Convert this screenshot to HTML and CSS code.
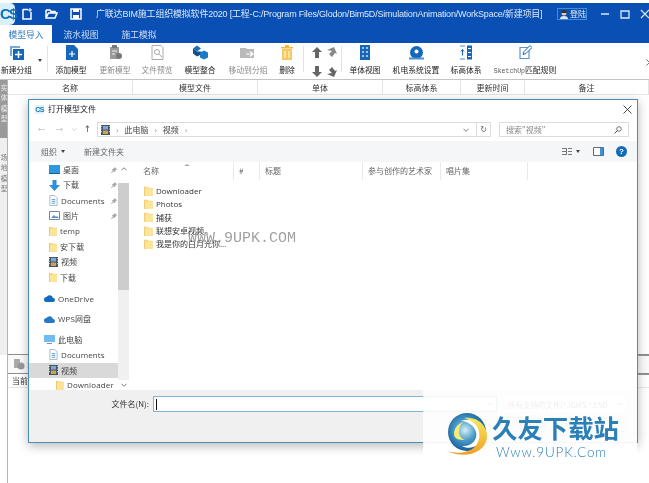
FILE: index.html
```html
<!DOCTYPE html>
<html lang="zh">
<head>
<meta charset="utf-8">
<title>广联达BIM施工组织模拟软件2020</title>
<link rel="stylesheet" href="styles.css">
</head>
<body>
<svg class="defs" width="0" height="0">
  <symbol id="folder" viewBox="0 0 10 12"><path d="M0 1h4l1 1h5v10H0z" fill="#fbd777"/><path d="M0 3h10v9H0z" fill="#fde49b"/><path d="M0 1h1v11H0z" fill="#e9c468"/></symbol>
  <symbol id="video" viewBox="0 0 10 11"><rect width="10" height="11" fill="#3b4a5c"/><rect x="2" y="1" width="6" height="4" fill="#7fa8d0"/><rect x="2" y="6" width="6" height="4" fill="#c9a45a"/><path d="M0 1h1v1H0zM0 4h1v1H0zM0 7h1v1H0zM9 1h1v1H9zM9 4h1v1H9zM9 7h1v1H9z" fill="#fff"/></symbol>
  <symbol id="doc" viewBox="0 0 10 12"><path d="M1 .5h5.500L9 3v8.500H1z" fill="#fff" stroke="#9fb4c6"/><path d="M3 5h4M3 7h4M3 9h4" stroke="#4a9bd0"/></symbol>
  <symbol id="pin" viewBox="0 0 8 8"><path d="M5 0l3 3-1 .5-1.500 2L5 7 3.500 5.500 1 8 0 8v-.500L2.500 4.500 1 3l1.500-.5 2-1.500z" fill="#a9a9a9"/></symbol>
  <symbol id="chev" viewBox="0 0 7 4"><path d="M.5.500l3 3 3-3" fill="none" stroke="#666"/></symbol>
</svg>
<div class="app">
  <div class="topgap"></div>
  <header class="titlebar">
    <div class="applogo">C$</div>
    <svg class="qa qa-first" width="12" height="12" viewBox="0 0 12 12"><path d="M2 1.500h5M2 1v10h8V4" fill="none" stroke="#fff" stroke-width="1.500"/><path d="M9 0v4M7 2h4" stroke="#fff"/></svg>
    <svg class="qa" width="13" height="12" viewBox="0 0 13 12"><path d="M1 2h4l1 1.500h4V5M1 2v8h9l2-5H3.500L1 10" fill="none" stroke="#fff" stroke-width="1.500"/></svg>
    <svg class="qa" width="12" height="12" viewBox="0 0 12 12"><path d="M1 1h10v10H1z" fill="none" stroke="#fff" stroke-width="1.500"/><path d="M3 1h6v3H3zM3 7h6v4H3z" fill="#fff"/></svg>
    <div class="wintitle">广联达BIM施工组织模拟软件2020 [工程-C:/Program Files/Glodon/Bim5D/SimulationAnimation/WorkSpace/新建项目]</div>
    <div class="login">
      <svg width="8" height="9" viewBox="0 0 8 9"><circle cx="4" cy="3" r="2.500" fill="#f0c8a0"/><path d="M1 3a3 3 0 0 1 6 0z" fill="#333"/><path d="M0 9a4 3 0 0 1 8 0z" fill="#dfe8f2"/></svg>
      <span>登陆</span>
    </div>
    <div class="winbtns">
      <svg width="10" height="10" viewBox="0 0 10 10"><path d="M1 5h8" stroke="#dce8f8" stroke-width="1.500"/></svg>
      <svg width="10" height="10" viewBox="0 0 10 10"><path d="M1 2h8v7H1z" fill="none" stroke="#dce8f8" stroke-width="1.300"/></svg>
      <svg width="10" height="10" viewBox="0 0 10 10"><path d="M1 1l8 8M9 1l-8 8" stroke="#dce8f8" stroke-width="1.200"/></svg>
    </div>
  </header>
  <nav class="tabs">
    <div class="tab tab-active">模型导入</div>
    <div class="tab">流水视图</div>
    <div class="tab">施工模拟</div>
  </nav>
  <section class="ribbon">
    <div class="rb w-new">
      <svg width="15" height="15" viewBox="0 0 15 15"><path d="M1 1h10v2H3v8H1z" fill="#7aa9d8"/><path d="M4 4h11v11H4z" fill="#1667b8"/><path d="M9.500 6v7M6 9.500h7" stroke="#fff" stroke-width="1.500"/></svg>
      <span>新建分组</span>
    </div>
    <div class="caret-box"><i class="caret"></i></div>
    <div class="rb-sep"></div>
    <div class="rb w-a">
      <svg width="13" height="15" viewBox="0 0 13 15"><path d="M1 0h8l4 4v11H1z" fill="#1667b8"/><path d="M7 6v6M4 9h6" stroke="#fff" stroke-width="1.200"/></svg>
      <span>添加模型</span>
    </div>
    <div class="rb w-b is-off">
      <svg width="13" height="15" viewBox="0 0 13 15"><path d="M1 2h9v12H1z" fill="#9a9a9a"/><path d="M3 0h5v3H3z" fill="#777"/><path d="M3 6h5M3 9h3" stroke="#eee"/><circle cx="10" cy="11" r="3" fill="#777"/></svg>
      <span>更新模型</span>
    </div>
    <div class="rb w-c is-off">
      <svg width="13" height="15" viewBox="0 0 13 15"><path d="M1 .500h9l2 2v12H1z" fill="#fff" stroke="#aaa"/><circle cx="6" cy="7" r="2.500" fill="none" stroke="#aaa"/><path d="M8 9l3 3" stroke="#aaa"/></svg>
      <span>文件预览</span>
    </div>
    <div class="rb w-d">
      <svg width="15" height="14" viewBox="0 0 15 14"><path d="M0 3l4-3 4 3-4 3z" fill="#1d6fb8"/><path d="M0 3v5l4 3V6zM8 3v3L4 6v5l4-2z" fill="#0f4f8c"/><path d="M7 7l4-2 4 2v5l-4 2-4-2z" fill="#1a7ac8"/></svg>
      <span>模型整合</span>
    </div>
    <div class="rb w-e is-off">
      <svg width="16" height="13" viewBox="0 0 16 13"><path d="M0 2h6l1 1h7v9H0z" fill="#b9b9b9"/><path d="M6 8h7M10 5.500L13 8l-3 2.500" fill="none" stroke="#fff" stroke-width="1.200"/></svg>
      <span>移动到分组</span>
    </div>
    <div class="rb w-f">
      <svg width="12" height="15" viewBox="0 0 12 15"><path d="M0 2h12v1.500H0zM4 0h4v2H4z" fill="#f0b840"/><path d="M1 4h10v11H1z" fill="#f6c95c"/><path d="M4 6v7M8 6v7" stroke="#fff"/></svg>
      <span>删除</span>
    </div>
    <div class="rb-sep sep-left"></div>
    <div class="arrows">
      <div class="arrow-row"><svg width="10" height="11" viewBox="0 0 10 11"><path d="M5 0l5 5H7v6H3V5H0z" fill="#666"/></svg><svg width="10" height="11" viewBox="0 0 10 11"><path d="M0 3l7-3 3 7-2-1-3 4-3-3 3-3z" fill="#888"/></svg></div>
      <div class="arrow-row"><svg width="10" height="11" viewBox="0 0 10 11"><path d="M5 11l5-5H7V0H3v6H0z" fill="#666"/></svg><svg width="10" height="11" viewBox="0 0 10 11"><path d="M0 8l7 3 3-7-2 1-3-4-3 3 3 3z" fill="#666"/></svg></div>
    </div>
    <div class="rb-sep"></div>
    <div class="rb w-g">
      <svg width="10" height="15" viewBox="0 0 10 15"><path d="M0 0h10v15H0z" fill="#1667b8"/><path d="M2 2h2v2H2zM6 2h2v2H6zM2 6h2v2H2zM6 6h2v2H6zM2 10h2v2H2zM6 10h2v2H6z" fill="#9cc4ea"/></svg>
      <span>单体视图</span>
    </div>
    <div class="rb w-h">
      <svg width="15" height="14" viewBox="0 0 15 14"><circle cx="7.500" cy="7" r="6.500" fill="#1667b8"/><circle cx="7.500" cy="6" r="2" fill="#fff"/><path d="M0 12h15v2H0z" fill="#4f90d0"/></svg>
      <span>机电系统设置</span>
    </div>
    <div class="rb w-i">
      <svg width="12" height="14" viewBox="0 0 12 14"><path d="M0 .500h5M0 13.500h5" stroke="#4f90d0"/><path d="M2.500 10V4M1 6l1.500-2L4 6" fill="none" stroke="#1667b8"/><path d="M7 0h5v14H7z" fill="#1667b8"/><path d="M8 3h3M8 7h3M8 11h3" stroke="#fff"/></svg>
      <span>标高体系</span>
    </div>
    <div class="rb w-j">
      <svg width="13" height="14" viewBox="0 0 13 14"><path d="M1 2h9v11H1z" fill="none" stroke="#5f97cc" stroke-width="1.200"/><path d="M4 9l1-3 6-6 2 2-6 6z" fill="#fff" stroke="#1667b8"/></svg>
      <span><b class="mono">SketchUp</b>匹配规则</span>
    </div>
    <div class="rb-more"><svg width="4" height="7" viewBox="0 0 4 7"><path d="M.5.500l3 3-3 3" fill="none" stroke="#777"/></svg></div>
  </section>
  <div class="workarea">
    <aside class="strip">
      <div class="strip-on">实体模型</div>
      <div class="strip-off">场地模型</div>
    </aside>
    <main class="main">
      <div class="thead">
        <div>名称</div><div>模型文件</div><div>单体</div><div>标高体系</div><div>更新时间</div><div>备注</div>
      </div>
      <div class="blank"></div>
      <div class="lower-tab">
        <svg width="13" height="11" viewBox="0 0 13 11"><path d="M2 0h6v9H2z" fill="#aaa"/><circle cx="9" cy="7" r="3.500" fill="#999"/></svg>
        <span>录</span>
      </div>
      <div class="lower-head">当前</div>
      <div class="lower-body"></div>
    </main>
  </div>

  <div class="dialog">
    <div class="dlg-title">
      <span class="dlg-cs">CS</span>
      <span class="dlg-name">打开模型文件</span>
      <svg class="dlg-x" width="9" height="9" viewBox="0 0 9 9"><path d="M.5.500l8 8M8.500.500l-8 8" stroke="#333" stroke-width=".9"/></svg>
    </div>
    <div class="addr-row">
      <span class="nav-arrow dim">←</span>
      <span class="nav-arrow dim">→</span>
      <svg class="nav-small" width="5" height="3"><use href="#chev"/></svg>
      <span class="nav-arrow up">↑</span>
      <div class="addr">
        <svg width="9" height="10"><use href="#video"/></svg>
        <span class="crumb-s">›</span><span>此电脑</span><span class="crumb-s">›</span><span>视频</span><span class="crumb-s">›</span>
        <span class="grow"></span>
        <svg class="addr-drop" width="6" height="4"><use href="#chev"/></svg>
        <span class="addr-ref">↻</span>
      </div>
      <div class="search"><span>搜索"视频"</span><svg width="8" height="8" viewBox="0 0 8 8"><circle cx="5" cy="3" r="2.300" fill="none" stroke="#555" stroke-width=".8"/><path d="M3.500 4.500L.5 7.500" stroke="#555"/></svg></div>
    </div>
    <div class="toolbar">
      <span>组织</span><i class="caret caret-s"></i>
      <span class="tb-new">新建文件夹</span>
      <span class="grow"></span>
      <svg class="tb-view" width="10" height="7" viewBox="0 0 10 7"><path d="M0 .5h4M6 .5h4M0 3.500h4M6 3.500h4M0 6.500h4M6 6.500h4" stroke="#777"/><path d="M4.500 0v7" stroke="#777"/></svg>
      <i class="caret caret-s"></i>
      <svg class="tb-pane" width="11" height="9" viewBox="0 0 11 9"><path d="M.5.500h10v8H.5z" fill="#fff" stroke="#667"/><path d="M7 1h3v7H7z" fill="#3f8fd6"/></svg>
      <span class="help">?</span>
    </div>
    <div class="dlg-body">
      <div class="navpane">
        <div class="navlist">
          <div class="nv nv1"><svg width="11" height="9" viewBox="0 0 11 9"><path d="M0 0h11v8H0z" fill="#2a9ae0"/><path d="M0 8h11v1H0z" fill="#1a5f90"/></svg><span>桌面</span><svg class="pin" width="6" height="6"><use href="#pin"/></svg></div>
          <div class="nv nv1"><svg width="11" height="11" viewBox="0 0 11 11"><path d="M3.500 0h4v5H11L5.500 11 0 5h3.500z" fill="#2f8fdc"/></svg><span>下载</span><svg class="pin" width="6" height="6"><use href="#pin"/></svg></div>
          <div class="nv nv1"><svg width="9" height="11"><use href="#doc"/></svg><span>Documents</span><svg class="pin" width="6" height="6"><use href="#pin"/></svg></div>
          <div class="nv nv1"><svg width="11" height="9" viewBox="0 0 11 9"><path d="M.5.500h10v8H.5z" fill="#fff" stroke="#6a8aa8"/><path d="M2 7l3-3 2 2 1-1 2 2z" fill="#5a93c4"/></svg><span>图片</span><svg class="pin" width="6" height="6"><use href="#pin"/></svg></div>
          <div class="nv nv1"><svg width="8" height="10"><use href="#folder"/></svg><span>temp</span></div>
          <div class="nv nv1"><svg width="8" height="10"><use href="#folder"/></svg><span>安下载</span></div>
          <div class="nv nv1"><svg width="9" height="10"><use href="#video"/></svg><span>视频</span></div>
          <div class="nv nv1"><svg width="8" height="10"><use href="#folder"/></svg><span>下载</span></div>
          <div class="nv nv0 gap-a"><svg width="11" height="7" viewBox="0 0 11 7"><path d="M2.500 7a2.500 2.500 0 0 1 0-5A3.500 3.500 0 0 1 9 3a2 2 0 0 1 0 4z" fill="#0f6cc0"/></svg><span>OneDrive</span></div>
          <div class="nv nv0 gap-b"><svg width="11" height="8" viewBox="0 0 11 8"><path d="M2.500 8a2.500 2.500 0 0 1 0-5A3.500 3.500 0 0 1 9 4a2 2 0 0 1 0 4z" fill="#2a78c4"/></svg><span>WPS网盘</span></div>
          <div class="nv nv0 gap-b"><svg width="11" height="9" viewBox="0 0 11 9"><path d="M0 0h11v7H0z" fill="#6fbdf0"/><path d="M3 8h5v1H3z" fill="#88a"/></svg><span>此电脑</span></div>
          <div class="nv nv1"><svg width="9" height="11"><use href="#doc"/></svg><span>Documents</span></div>
          <div class="nv nv1 nv-sel"><svg width="9" height="10"><use href="#video"/></svg><span>视频</span></div>
          <div class="nv nv2"><svg width="8" height="10"><use href="#folder"/></svg><span>Downloader</span></div>
        </div>
        <div class="scroll">
          <div class="sc-top"><svg class="flip" width="6" height="4"><use href="#chev"/></svg></div>
          <div class="sc-thumb"></div>
          <span class="grow"></span>
          <div class="sc-bot"><svg width="6" height="4"><use href="#chev"/></svg></div>
        </div>
      </div>
      <div class="files">
        <div class="fhead">
          <div class="fc fc1">名称</div><div class="fc fc2">#</div><div class="fc fc3">标题</div><div class="fc fc4">参与创作的艺术家</div><div class="fc fc5">唱片集</div>
          <i class="sort"></i>
        </div>
        <div class="frows">
          <div class="frow"><svg width="9" height="10"><use href="#folder"/></svg><span>Downloader</span></div>
          <div class="frow"><svg width="9" height="10"><use href="#folder"/></svg><span>Photos</span></div>
          <div class="frow"><svg width="9" height="10"><use href="#folder"/></svg><span>捕获</span></div>
          <div class="frow"><svg width="9" height="10"><use href="#folder"/></svg><span>联想安卓视频</span></div>
          <div class="frow"><svg width="9" height="10"><use href="#folder"/></svg><span>我是你的白月光你...</span></div>
        </div>
      </div>
    </div>
    <div class="dlg-foot">
      <div class="foot-row">
        <label class="fname">文件名(N):</label>
        <div class="finput"><i class="cursor"></i><span class="grow"></span><svg class="drop" width="6" height="4"><use href="#chev"/></svg></div>
        <div class="ftype"><span>所有支持的文件(*.iGMS *.ESD</span><svg class="drop" width="6" height="4"><use href="#chev"/></svg></div>
      </div>
      <div class="foot-btns">
        <div class="fbtn">打开(O)</div>
        <div class="fbtn">取消</div>
      </div>
    </div>
  </div>

  <div class="lines-r"></div>
  <div class="wm-text">WWW.9UPK.COM</div>
  <div class="wm-cover"></div>
  <div class="wm-logo">
    <svg width="46" height="47" viewBox="0 0 46 47">
      <defs>
        <radialGradient id="ball" cx="45%" cy="45%" r="60%"><stop offset="0" stop-color="#d8eef6"/><stop offset=".45" stop-color="#4a9cc8"/><stop offset="1" stop-color="#0d4f92"/></radialGradient>
        <linearGradient id="ring" x1="0" y1="0" x2="0" y2="1"><stop offset="0" stop-color="#f6e860"/><stop offset="1" stop-color="#f0a024"/></linearGradient>
      </defs>
      <circle cx="20" cy="20" r="19" fill="url(#ball)"/>
      <path d="M14 9C24 5 37 10 37 21c0 12-14 18-22 13 10 1 16-7 14-14C27 13 20 9 14 9z" fill="#fff"/>
      <path d="M17 6c14-2 24 8 23 20C38 40 20 48 0 39c14 4 29 1 32-12C34 15 27 9 17 6z" fill="url(#ring)"/>
      <path d="M7 22c0-6 4-10 9-12-3 3-4 6-4 10 0 4 3 7 6 8-6 0-11-1-11-6z" fill="#f5ea7a"/>
    </svg>
    <div class="wm-words">
      <div class="wm-cn">久友下载站</div>
      <div class="wm-en">Www.9UPK.Com</div>
    </div>
  </div>
</div>
</body>
</html>
```

FILE: styles.css
```css
* { box-sizing: border-box; }
html, body { margin: 0; padding: 0; background: #fff; }
body { width: 649px; height: 483px; overflow: hidden; }
.defs { position: absolute; }
.grow { flex: 1; }
.app {
  position: relative;
  width: 649px;
  height: 483px;
  overflow: hidden;
  display: flex;
  flex-direction: column;
  background: #fff;
  color: #333;
  font: 8px/1.2 "Noto Sans CJK SC", "Open Sans", sans-serif;
  filter: blur(.35px);
}
.topgap { height: 3px; flex: none; }

/* title bar */
.titlebar {
  height: 22px;
  flex: none;
  display: flex;
  align-items: center;
  background: #0a50b4;
  color: #dbe8f8;
  position: relative;
}
.applogo {
  width: 15px;
  height: 22px;
  background: #d9f0fa;
  border-radius: 0 5px 5px 0;
  color: #1270b8;
  font: 700 15px/22px "Liberation Sans", sans-serif;
  text-align: center;
  letter-spacing: -1.500px;
  flex: none;
}
.qa { margin-left: 12px; flex: none; }
.qa-first { margin-left: 6px; }
.wintitle {
  margin-left: 14px;
  font: 400 9px/12px "Liberation Sans", "Noto Sans CJK SC", sans-serif;
  letter-spacing: -.2px;
  white-space: nowrap;
  width: 456px;
  flex: none;
}
.login {
  margin-left: 5px;
  width: 30px;
  height: 12px;
  border: 1px solid #3d8ddc;
  display: flex;
  align-items: center;
  gap: 2px;
  padding-left: 2px;
  color: #e8f0fa;
  font-size: 8px;
  flex: none;
}
.winbtns { margin-left: 13px; display: flex; gap: 10px; flex: none; }

/* tabs */
.tabs {
  height: 18px;
  flex: none;
  display: flex;
  background: #0a50b4;
  color: #cfdff4;
  font-size: 8.800px;
}
.tab { width: 58px; line-height: 20px; text-align: center; }
.tab-active { width: 52px; background: #fff; color: #2e78bc; }

/* ribbon */
.ribbon {
  height: 37px;
  flex: none;
  display: flex;
  background: #fff;
  border-bottom: 1px solid #c4c4c4;
  align-items: stretch;
  white-space: nowrap;
  color: #222;
  font-size: 7.800px;
}
.rb {
  display: flex;
  flex-direction: column;
  align-items: center;
  flex: none;
  padding-top: 2px;
}
.rb svg { height: 15px; flex: none; }
.rb span { margin-top: 4px; line-height: 11px; }
.is-off { color: #8a8a8a; }
.w-new { width: 33px; }
.caret-box { width: 14px; padding: 16px 0 0 5px; flex: none; }
.caret {
  display: block;
  width: 0;
  height: 0;
  border: 2.500px solid transparent;
  border-top: 3px solid #444;
  border-bottom: 0;
}
.rb-sep { width: 1px; margin: 3px 0 7px; background: #e2e2e2; flex: none; }
.w-a { width: 46px; }
.w-b { width: 42px; }
.w-c { width: 42px; }
.w-d { width: 44px; }
.w-e { width: 52px; }
.w-f { width: 26px; }
.sep-left { margin-left: 3px; }
.arrows {
  width: 37px;
  display: flex;
  flex-direction: column;
  gap: 8px;
  padding: 4px 0 0 8px;
  flex: none;
}
.arrow-row { display: flex; gap: 5px; height: 11px; }
.w-g { width: 46px; }
.w-h { width: 56px; }
.w-i { width: 44px; }
.w-j { width: 74px; }
.mono { font: 400 6.500px "Liberation Mono", monospace; color: #555; }
.rb-more { margin-left: 84px; padding-top: 15px; flex: none; }

/* work area */
.workarea { flex: 1; display: flex; min-height: 0; }
.strip {
  width: 8px;
  flex: none;
  display: flex;
  flex-direction: column;
  border-right: 1px solid #b5b5b5;
}
.strip-on, .strip-off {
  writing-mode: vertical-rl;
  font-size: 6.500px;
  line-height: 7px;
  letter-spacing: 4px;
  padding-top: 4px;
}
.strip-on { height: 58px; background: #9a9a9a; color: #eee; }
.strip-off { height: 217px; background: #efefef; color: #777; padding-top: 16px; }
.main { flex: 1; display: flex; flex-direction: column; min-width: 0; }
.thead {
  height: 15px;
  flex: none;
  display: grid;
  grid-template-columns: 125px 125px 125px 78px 64px 1fr;
  line-height: 15px;
  text-align: center;
  border-bottom: 1px solid #e6e6e6;
  color: #333;
}
.thead > div { border-right: 1px solid #e3e3e3; }
.blank { height: 260px; flex: none; border-bottom: 1px solid #8e8e8e; }
.lower-tab {
  height: 19px;
  flex: none;
  padding: 4px 0 0 4px;
  display: flex;
  gap: 2px;
  background: #fafafa;
  border-bottom: 1px solid #8e8e8e;
  color: #666;
}
.lower-head { height: 14px; flex: none; padding-left: 4px; line-height: 14px; border-bottom: 1px solid #e8e8e8; }
.lower-body { flex: 1; }

/* dialog */
.dialog {
  position: absolute;
  left: 28px;
  top: 99px;
  width: 610px;
  height: 344px;
  display: flex;
  flex-direction: column;
  background: #fff;
  border: 1px solid #4d8cb4;
  box-shadow: 0 3px 10px rgba(0, 0, 0, .28);
  color: #444;
}
.dlg-title { height: 22px; flex: none; display: flex; align-items: center; padding: 0 5px 4px 6px; color: #222; }
.dlg-cs {
  width: 9px;
  height: 9px;
  background: #dff1fb;
  color: #1a78c0;
  font: 700 7px/9px "Liberation Sans", sans-serif;
  text-align: center;
  letter-spacing: -.5px;
  flex: none;
}
.dlg-name { margin-left: 4px; flex: 1; }
.dlg-x { flex: none; }
.addr-row { height: 15px; flex: none; display: flex; align-items: center; margin-bottom: 4px; }
.nav-arrow { width: 15px; text-align: center; font: 9px/15px "DejaVu Sans", sans-serif; flex: none; }
.nav-arrow.dim { color: #c8c8c8; margin-left: 5px; }
.nav-arrow.dim + .nav-arrow.dim { margin-left: 3px; }
.nav-arrow.up { color: #555; margin-left: 3px; }
.nav-small { margin-left: 5px; flex: none; opacity: .4; }
.addr {
  margin-left: 2px;
  width: 394px;
  height: 15px;
  flex: none;
  display: flex;
  align-items: center;
  gap: 5px;
  border: 1px solid #dcdcdc;
  padding-left: 3px;
}
.crumb-s { color: #888; margin: 0 1px; }
.addr-drop { flex: none; margin-right: 2px; }
.addr-ref {
  width: 14px;
  height: 13px;
  border-left: 1px solid #dcdcdc;
  color: #666;
  text-align: center;
  font: 8px/13px "DejaVu Sans", sans-serif;
}
.search {
  margin-left: 8px;
  width: 130px;
  height: 15px;
  flex: none;
  border: 1px solid #dcdcdc;
  display: flex;
  align-items: center;
  justify-content: space-between;
  padding: 0 6px;
  color: #888;
}
.toolbar {
  height: 21px;
  flex: none;
  display: flex;
  align-items: center;
  padding: 0 10px 0 12px;
  background: #f5f6f7;
  color: #666;
}
.caret-s { margin-left: 4px; }
.tb-new { margin-left: 19px; }
.tb-view { flex: none; }
.tb-pane { margin-left: 13px; flex: none; }
.help {
  margin-left: 12px;
  width: 11px;
  height: 11px;
  border-radius: 50%;
  background: #0f6cbd;
  color: #fff;
  font: 700 8px/11px "Liberation Sans", sans-serif;
  text-align: center;
  flex: none;
}
.dlg-body { height: 228px; flex: none; display: flex; overflow: hidden; }
.navpane { width: 100px; flex: none; display: flex; }
.navlist { width: 89px; flex: none; font-family: "Open Sans", "Noto Sans CJK SC", sans-serif; color: #444; }
.nv {
  height: 15.400px;
  display: flex;
  align-items: center;
  gap: 3px;
  white-space: nowrap;
  position: relative;
  overflow: hidden;
}
.nv svg { flex: none; }
.nv span { letter-spacing: .1px; }
.nv1 { padding-left: 20px; }
.nv0 { padding-left: 15px; }
.nv2 { padding-left: 27px; height: 14px; }
.nv-sel { background: #d9d9d9; }
.pin { position: absolute; right: 1px; top: 5px; }
.gap-a { margin-top: 6px; }
.gap-b { margin-top: 5px; }
.scroll {
  width: 11px;
  flex: none;
  background: #f0f0f0;
  display: flex;
  flex-direction: column;
  align-items: center;
}
.sc-top { height: 21px; width: 100%; flex: none; background: #fff; padding: 5px 0 0 3px; line-height: 0; }
.flip { transform: rotate(180deg); }
.sc-bot { height: 10px; width: 100%; flex: none; background: #fff; padding: 3px 0 0 3px; line-height: 0; }
.sc-thumb { width: 11px; height: 107px; background: #cdcdcd; flex: none; }
.files { flex: 1; position: relative; min-width: 0; }
.fhead { height: 18px; display: flex; color: #666; line-height: 18px; }
.fc { border-right: 1px solid #e9e9e9; padding-left: 5px; flex: none; }
.fc1 { width: 105px; padding-left: 14px; }
.fc2 { width: 26px; }
.fc3 { width: 103px; }
.fc4 { width: 78px; }
.fc5 { width: 87px; }
.sort {
  position: absolute;
  left: 55px;
  top: 2px;
  border: 3px solid transparent;
  border-bottom: 2px solid #aaa;
  border-top: 0;
}
.frows { padding: 4px 0 0 15px; }
.frow {
  height: 13.400px;
  display: flex;
  align-items: center;
  gap: 3px;
  color: #333;
  font-family: "Open Sans", "Noto Sans CJK SC", sans-serif;
  white-space: nowrap;
}
.dlg-foot { flex: 1; background: #f0f0f0; }
.foot-row { height: 22px; display: flex; align-items: flex-end; }
.fname { width: 120px; text-align: right; line-height: 14px; color: #333; flex: none; padding-bottom: 1px; }
.finput {
  margin-left: 4px;
  width: 344px;
  height: 16px;
  flex: none;
  background: #fff;
  border: 1px solid #7fb6d2;
  display: flex;
  align-items: center;
  padding: 0 3px 0 2px;
}
.cursor { width: 1px; height: 11px; background: #111; }
.drop { margin-left: 3px; flex: none; }
.ftype {
  margin-left: 8px;
  width: 121px;
  height: 16px;
  flex: none;
  display: flex;
  align-items: center;
  justify-content: space-between;
  padding: 0 3px;
  background: #fff;
  color: #666;
  white-space: nowrap;
  overflow: hidden;
  font-size: 7.500px;
}
.foot-btns { display: flex; gap: 6px; justify-content: flex-end; padding: 5px 11px 0 0; }
.fbtn { width: 58px; height: 15px; border: 1px solid #ccc; line-height: 13px; text-align: center; background: #eee; color: #666; }

/* overlays */
.lines-r {
  position: absolute;
  left: 638px;
  top: 355px;
  width: 11px;
  height: 20px;
  border-top: 1px solid #8e8e8e;
  border-bottom: 1px solid #8e8e8e;
}
.wm-text {
  position: absolute;
  left: 188px;
  top: 231px;
  font: 400 15px/15px "Liberation Mono", monospace;
  color: rgba(120, 120, 120, .7);
  white-space: nowrap;
}
.wm-cover {
  position: absolute;
  left: 423px;
  top: 390px;
  width: 214px;
  height: 72px;
  background: linear-gradient(to bottom, rgba(255, 255, 255, .88) 0, rgba(255, 255, 255, .9) 70%, #fff 80%);
}
.wm-logo {
  position: absolute;
  left: 447px;
  top: 412px;
  display: flex;
  align-items: flex-start;
}
.wm-words { margin-left: -1px; }
.wm-cn {
  font: 700 25.400px/30px "Noto Sans CJK SC", sans-serif;
  color: #2b80b8;
  white-space: nowrap;
  height: 33px;
}
.wm-en {
  margin-left: 4px;
  font: 300 13.500px/14px "Lato", "Open Sans", sans-serif;
  color: #2b80b8;
  letter-spacing: .8px;
  white-space: nowrap;
}
```
